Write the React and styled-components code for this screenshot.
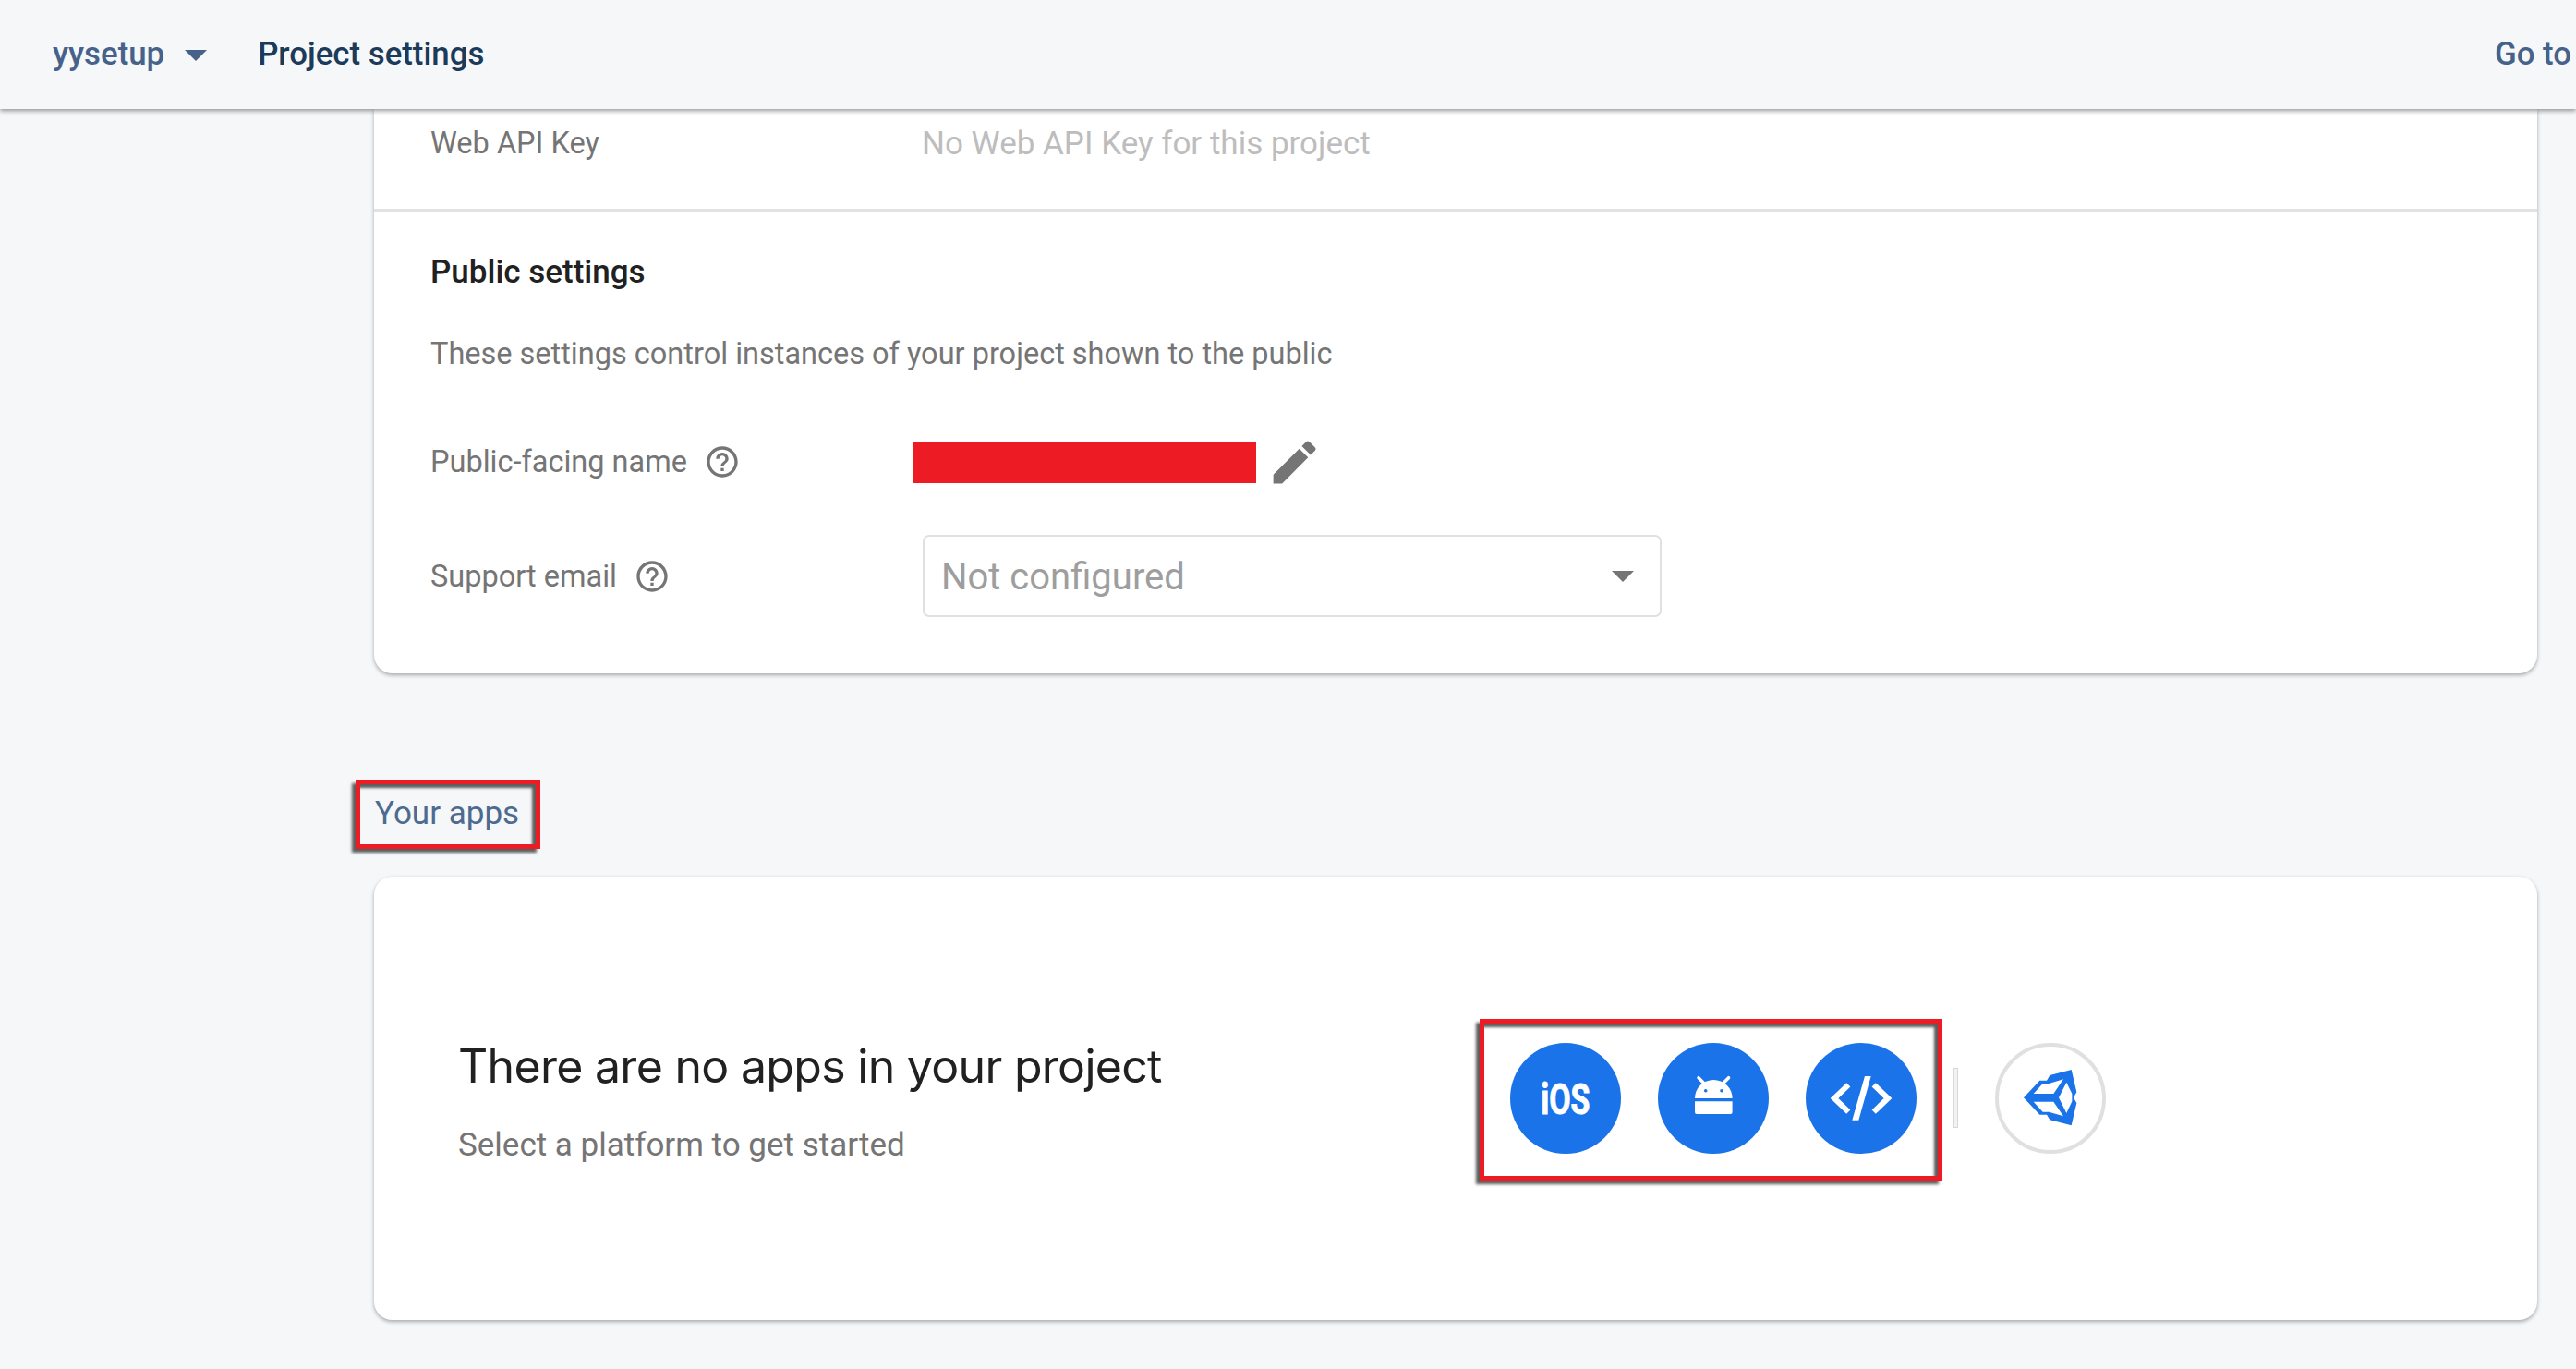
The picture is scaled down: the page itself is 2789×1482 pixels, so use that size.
import React from 'react';
import styled, { createGlobalStyle } from 'styled-components';
import { MdEdit, MdHelpOutline } from 'react-icons/md';

const GlobalStyle = createGlobalStyle`
	html, body {
		margin: 0;
		height: 1482px;
		overflow: hidden;
		background: #f5f7f9;
		font-family: Roboto, 'Noto Sans', sans-serif;
	}
`;

const Page = styled.div`
	display: flex;
	flex-direction: column;
	height: 1482px;
`;

const TopBar = styled.header`
	position: relative;
	z-index: 2;
	display: flex;
	align-items: center;
	box-sizing: border-box;
	flex: 0 0 118px;
	padding: 0 5px 3px 57px;
	background: #f5f7f9;
	box-shadow: 0 2px 5px rgba(0, 0, 0, 0.42);
	font-size: 34.8px;
	font-weight: 500;
`;

const ProjectName = styled.span`
	color: #46628a;
`;

const Caret = styled.span`
	width: 0;
	height: 0;
	margin: ${(p) => p.$margin};
	border-left: 12.5px solid transparent;
	border-right: 12.5px solid transparent;
	border-top: 12px solid ${(p) => p.$color};
`;

const PageTitle = styled.span`
	color: #1c3a5a;
`;

const GoTo = styled.span`
	margin-left: auto;
	color: #46628a;
`;

const Content = styled.main`
	display: flex;
	flex-direction: column;
	padding: 0 42px 0 405px;
`;

const Card = styled.section`
	background: #fff;
	border-radius: ${(p) => (p.$flatTop ? '0 0 20px 20px' : '20px')};
	box-shadow: 0 2px 4px rgba(0, 0, 0, 0.32);
`;

const KeyRow = styled.div`
	display: flex;
	align-items: center;
	box-sizing: border-box;
	height: 111px;
	padding: 0 0 34px 61px;
	border-bottom: 3px solid #e2e2e2;
`;

const Label = styled.span`
	display: flex;
	align-items: center;
	flex: 0 0 533px;
	color: #757575;
	font-size: 32.5px;
`;

const MutedValue = styled.span`
	margin-left: -1px;
	color: #bdbdbd;
	font-size: 35px;
`;

const Settings = styled.div`
	padding: 46px 0 61px 61px;
`;

const SectionTitle = styled.h3`
	margin: 0;
	color: #212121;
	font-size: 35px;
	font-weight: 500;
	line-height: 40px;
`;

const Description = styled.p`
	margin: 48px 0 0;
	color: #757575;
	font-size: 32.5px;
	line-height: 40px;
`;

const Row = styled.div`
	display: flex;
	align-items: center;
	height: ${(p) => p.$height}px;
	margin-top: ${(p) => p.$top}px;
`;

const Help = styled(MdHelpOutline)`
	margin-left: 18px;
	font-size: 40px;
	color: #757575;
`;

const RedactedName = styled.div`
	width: 371px;
	height: 45px;
	margin-left: -10px;
	background: #ed1c24;
`;

const Pencil = styled(MdEdit)`
	margin-left: 11px;
	font-size: 61px;
	color: #757575;
`;

const Select = styled.div`
	display: flex;
	align-items: center;
	justify-content: space-between;
	box-sizing: border-box;
	width: 800px;
	height: 89px;
	padding: 2px 28px 0 18px;
	border: 2px solid #e0e0e0;
	border-radius: 7px;
	color: #9e9e9e;
	font-size: 40px;
`;

const AppsHeading = styled.h2`
	display: flex;
	align-items: center;
	box-sizing: border-box;
	width: 200px;
	height: 75px;
	margin: 115px 0 30px -20px;
	padding: 0 0 3px 16px;
	border: 5px solid #ed1c24;
	box-shadow: -4px 4px 3px #5c5c5c, inset -4px 4px 3px #5c5c5c;
	color: #4d6b90;
	font-size: 35px;
	font-weight: 400;
`;

const AppsCard = styled(Card)`
	display: flex;
	align-items: flex-start;
	box-sizing: border-box;
	height: 480px;
	padding: 154px 0 0 91px;
`;

const Intro = styled.div`
	flex: 0 0 1106px;
	margin-top: 21px;
`;

const IntroTitle = styled.h1`
	margin: 0;
	color: #212121;
	font-family: Inter, sans-serif;
	font-size: 50px;
	font-weight: 400;
	letter-spacing: -0.7px;
	line-height: 60px;
`;

const IntroText = styled.p`
	margin: 36px 0 0;
	color: #757575;
	font-size: 35px;
	line-height: 40px;
`;

const PlatformBox = styled.div`
	display: flex;
	gap: 40px;
	padding: 21px 23px 24px 28px;
	border: 5px solid #ed1c24;
	box-shadow: -4px 4px 3px #5c5c5c, inset -4px 4px 3px #5c5c5c;
`;

const Platform = styled.div`
	display: flex;
	align-items: center;
	justify-content: center;
	box-sizing: border-box;
	width: 120px;
	height: 120px;
	border-radius: 50%;
	background: ${(p) => (p.$outlined ? '#fff' : '#1a73e8')};
	border: ${(p) => (p.$outlined ? '4px solid #e0e0e0' : 'none')};
	margin: ${(p) => (p.$outlined ? '26px 0 0 40px' : '0')};
`;

const IosMark = styled.span`
	color: #fff;
	font-family: Roboto, sans-serif;
	font-size: 47px;
	font-weight: 700;
	line-height: 1;
	transform: scaleX(0.72);
	-webkit-text-stroke: 1px #fff;
`;

const Separator = styled.div`
	box-sizing: border-box;
	width: 5px;
	height: 65px;
	margin: 53px 0 0 12px;
	background: #f2f2f2;
	border: 1px solid #d8d8d8;
`;

function AndroidIcon() {
	return (
		<svg width="120" height="120" viewBox="0 0 120 120">
			<path d="M40 60a20.3 20 0 0 1 40.6 0z" fill="#fff" />
			<path d="M40 63.3h40.6V75a2 2 0 0 1-2 2H42a2 2 0 0 1-2-2z" fill="#fff" />
			<path d="M44 37.7l6 6M76.6 37.7l-6 6" stroke="#fff" strokeWidth="3.5" strokeLinecap="round" />
			<circle cx="51.7" cy="51.7" r="1.8" fill="#1a73e8" />
			<circle cx="69" cy="51.7" r="1.8" fill="#1a73e8" />
		</svg>
	);
}

function CodeIcon() {
	return (
		<svg width="120" height="120" viewBox="0 0 120 120">
			<path d="M46.3 45.3L31 60l15.3 14.7M73.7 45.3L89 60 73.7 74.7" fill="none" stroke="#fff" strokeWidth="6" />
			<path d="M64 36h6.7L57.3 83.7h-7z" fill="#fff" />
		</svg>
	);
}

function UnityIcon() {
	return (
		<svg width="80" height="80" viewBox="0 0 240 240">
			<path
				fillRule="evenodd"
				fill="#1a73e8"
				d="M33 118L85 62h23l10-17 70-18 17 73-10 18 10 17-17 73-70-18-10-17H85zM65 105h65l32-47-47 14H95zM147 118l25 50 18-38v-25l-18-37zM65 131l30 33h20l47 14-32-47z"
			/>
		</svg>
	);
}

function App() {
	return (
		<Page>
			<GlobalStyle />
			<TopBar>
				<ProjectName>yysetup</ProjectName>
				<Caret $color="#46628a" $margin="4px 55px 0 22px" />
				<PageTitle>Project settings</PageTitle>
				<GoTo>Go to</GoTo>
			</TopBar>
			<Content>
				<Card $flatTop>
					<KeyRow>
						<Label>Web API Key</Label>
						<MutedValue>No Web API Key for this project</MutedValue>
					</KeyRow>
					<Settings>
						<SectionTitle>Public settings</SectionTitle>
						<Description>These settings control instances of your project shown to the public</Description>
						<Row $height={46} $top={74}>
							<Label>
								Public-facing name
								<Help />
							</Label>
							<RedactedName />
							<Pencil />
						</Row>
						<Row $height={89} $top={56}>
							<Label>
								Support email
								<Help />
							</Label>
							<Select>
								Not configured
								<Caret $color="#757575" $margin="-2px 0 0" />
							</Select>
						</Row>
					</Settings>
				</Card>
				<AppsHeading>Your apps</AppsHeading>
				<AppsCard>
					<Intro>
						<IntroTitle>There are no apps in your project</IntroTitle>
						<IntroText>Select a platform to get started</IntroText>
					</Intro>
					<PlatformBox>
						<Platform>
							<IosMark>iOS</IosMark>
						</Platform>
						<Platform>
							<AndroidIcon />
						</Platform>
						<Platform>
							<CodeIcon />
						</Platform>
					</PlatformBox>
					<Separator />
					<Platform $outlined>
						<UnityIcon />
					</Platform>
				</AppsCard>
			</Content>
		</Page>
	);
}

export default App;
